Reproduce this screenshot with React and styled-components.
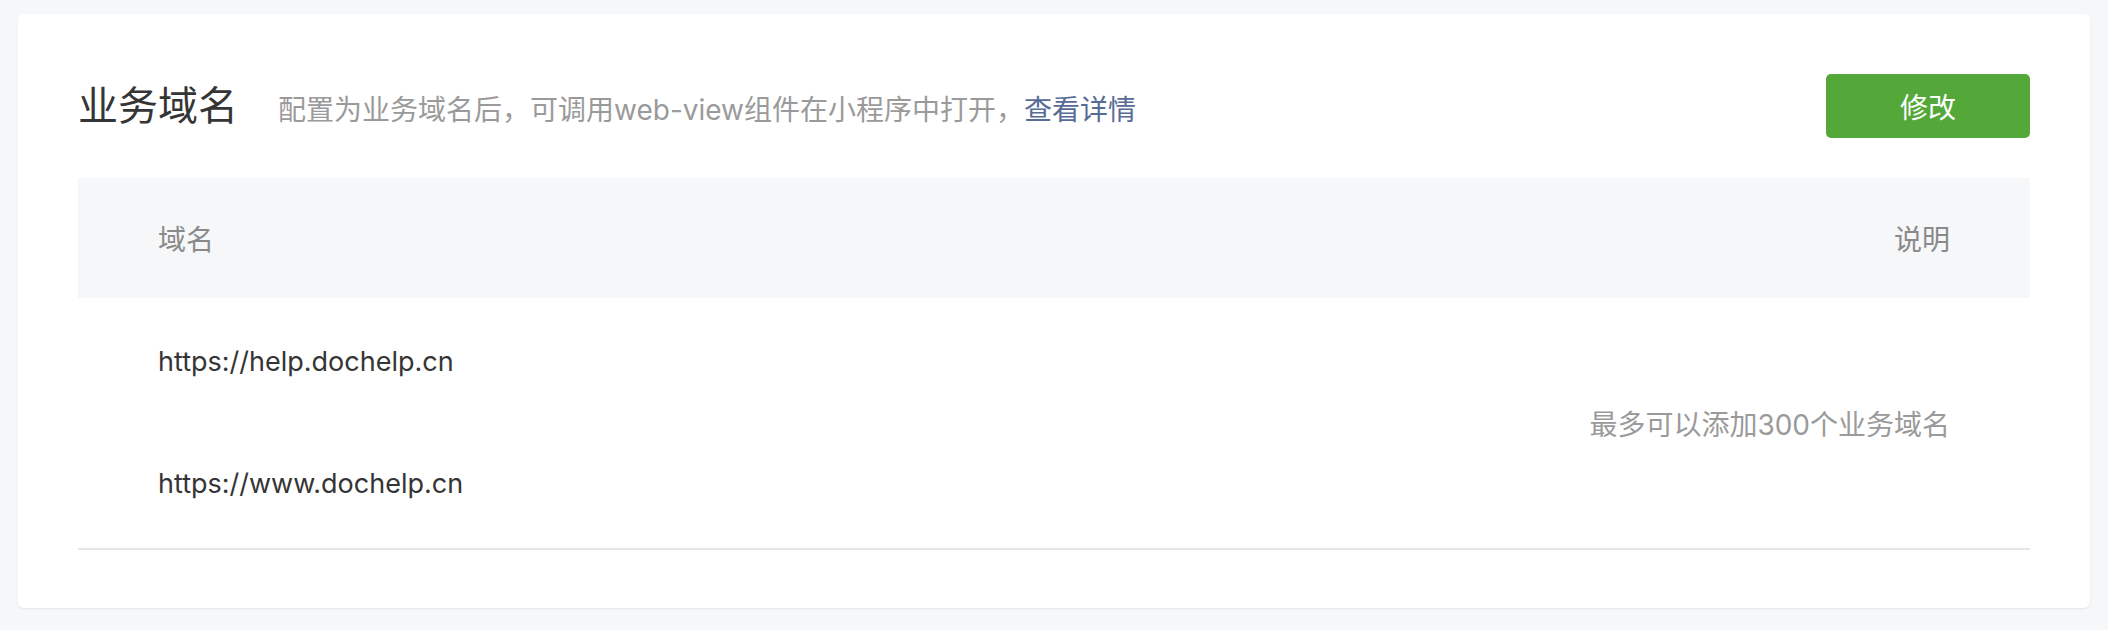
import React from 'react'
import styled, { createGlobalStyle } from 'styled-components'

const GlobalStyle = createGlobalStyle`
  html, body {
    margin: 0;
    padding: 0;
    background: #f6f7f9;
    font-family: Inter, "Noto Sans CJK SC", sans-serif;
  }
`

const Page = styled.div`
  padding: 14px 18px 22px;
`

const Card = styled.section`
  background: #ffffff;
  border-radius: 6px;
  box-shadow: 0 1px 2px rgba(0, 0, 0, 0.08);
  padding: 60px 60px 58px;
`

const Header = styled.div`
  display: flex;
  align-items: center;
  justify-content: space-between;
  height: 64px;
  margin-bottom: 40px;
`

const TitleGroup = styled.div`
  display: flex;
  align-items: baseline;
`

const Title = styled.h2`
  margin: 0;
  font-size: 40px;
  font-weight: 400;
  color: #353535;
  line-height: 1;
`

const Tips = styled.p`
  margin: 0 0 0 40px;
  font-size: 28px;
  color: #9a9a9a;
  line-height: 1;
`

const TipLink = styled.a`
  color: #576b95;
  text-decoration: none;
`

const Button = styled.button`
  width: 204px;
  height: 64px;
  border: 0;
  border-radius: 5px;
  background: #53a839;
  color: #ffffff;
  font-family: inherit;
  font-size: 28px;
  cursor: pointer;
`

const Table = styled.div`
  border-bottom: 2px solid #e6e6ea;
`

const TableHead = styled.div`
  display: flex;
  justify-content: space-between;
  align-items: center;
  height: 120px;
  padding: 0 80px;
  background: #f6f7f9;
  font-size: 28px;
  color: #8a8a8a;
`

const TableBody = styled.div`
  display: flex;
  justify-content: space-between;
  align-items: center;
  padding: 40px 80px;
`

const DomainList = styled.div`
  display: flex;
  flex-direction: column;
  gap: 74px;
`

const Domain = styled.div`
  font-size: 27px;
  line-height: 48px;
  color: #353535;
`

const Note = styled.div`
  font-size: 28px;
  color: #9a9a9a;
`

const domains = ['https://help.dochelp.cn', 'https://www.dochelp.cn']

export default function App() {
  return (
    <Page>
      <GlobalStyle />
      <Card>
        <Header>
          <TitleGroup>
            <Title>业务域名</Title>
            <Tips>
              配置为业务域名后，可调用web-view组件在小程序中打开，<TipLink href="#">查看详情</TipLink>
            </Tips>
          </TitleGroup>
          <Button>修改</Button>
        </Header>
        <Table>
          <TableHead>
            <span>域名</span>
            <span>说明</span>
          </TableHead>
          <TableBody>
            <DomainList>
              {domains.map((d) => (
                <Domain key={d}>{d}</Domain>
              ))}
            </DomainList>
            <Note>最多可以添加300个业务域名</Note>
          </TableBody>
        </Table>
      </Card>
    </Page>
  )
}
